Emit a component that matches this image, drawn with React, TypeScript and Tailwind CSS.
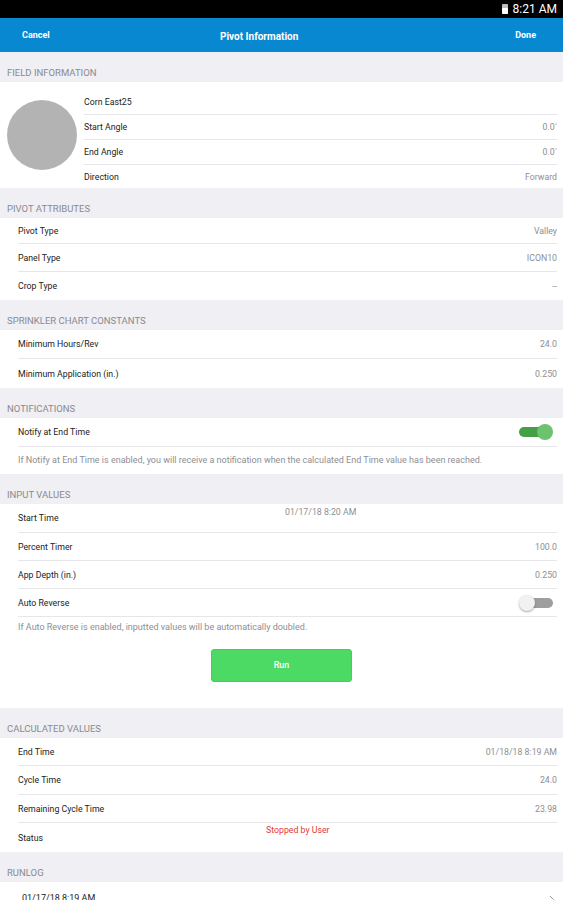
import {ReactNode} from "react";

const font = {fontFamily: "Roboto, 'Noto Sans', sans-serif"};

function SectionHeader({title}: {title: string}) {
    return (
        <div className="h-[30px] pt-[15px] pl-[7px] text-[9.5px] leading-[12px] text-[#8a8a8f] uppercase">
            {title}
        </div>
    );
}

function Row({label, value, h = "h-[28px]", last = false, children}: {
    label: string;
    value?: string;
    h?: string;
    last?: boolean;
    children?: ReactNode;
}) {
    return (
        <div className={`${h} ml-[18px] mr-[6px] pt-[2px] flex items-center justify-between ${last ? "" : "border-b border-[#e6e6ea]"}`}>
            <span className="text-[8.75px] text-[#222]">{label}</span>
            {value !== undefined && <span className="text-[8.75px] text-[#8e8e93]">{value}</span>}
            {children}
        </div>
    );
}

function Toggle({on}: {on: boolean}) {
    return on ? (
        <div className="relative w-[34px] h-[16px] flex items-center mr-[4px] -mt-[2px]">
            <div className="w-[30px] h-[10px] rounded-full bg-[#43a047]"/>
            <div className="absolute right-0 top-0 w-[16px] h-[16px] rounded-full bg-[#6cc26f]"/>
        </div>
    ) : (
        <div className="relative w-[34px] h-[16px] flex items-center justify-end mr-[4px] -mt-[2px]">
            <div className="w-[29px] h-[10px] rounded-full bg-[#9e9e9e]"/>
            <div className="absolute left-0 top-0 w-[16px] h-[16px] rounded-full bg-[#f1f1f1] shadow-[0_1px_2px_rgba(0,0,0,0.35)]"/>
        </div>
    );
}

export default function App() {
    return (
        <div className="w-[563px] h-[900px] overflow-hidden bg-[#efeff4]" style={font}>
            {/* status bar */}
            <div className="h-[18px] bg-black flex items-center justify-end pr-[6px] gap-[5px]">
                <div className="w-[6px] h-[10px] bg-[#bdbdbd] rounded-[1px] relative">
                    <div className="absolute bottom-0 left-0 right-0 h-[6px] bg-white rounded-[1px]"/>
                </div>
                <span className="text-white text-[12px] leading-none">8:21 AM</span>
            </div>

            {/* nav */}
            <div className="h-[34px] bg-[#0788d0] flex items-center pt-[2px] pl-[22px] pr-[27px] text-white font-bold text-[9px]">
                <span className="w-[198px]">Cancel</span>
                <span className="text-[10px]">Pivot Information</span>
                <span className="flex-1 text-right">Done</span>
            </div>

            <SectionHeader title="Field Information"/>
            <div className="bg-white h-[106px] flex items-center">
                <div className="ml-[7px] w-[70px] h-[70px] rounded-full bg-[#b3b3b3] shrink-0"/>
                <div className="flex-1 ml-[7px] mr-[6px] pt-[8px] self-start">
                    <div className="h-[25px] pt-[2px] flex items-center border-b border-[#e6e6ea] text-[8.75px] text-[#222]">Corn East25</div>
                    <div className="h-[25px] pt-[2px] flex items-center justify-between border-b border-[#e6e6ea] text-[8.75px]">
                        <span className="text-[#222]">Start Angle</span>
                        <span className="text-[#8e8e93]">0.0<sup className="text-[6px]">°</sup></span>
                    </div>
                    <div className="h-[25px] pt-[2px] flex items-center justify-between border-b border-[#e6e6ea] text-[8.75px]">
                        <span className="text-[#222]">End Angle</span>
                        <span className="text-[#8e8e93]">0.0<sup className="text-[6px]">°</sup></span>
                    </div>
                    <div className="h-[24px] pt-[2px] flex items-center justify-between text-[8.75px]">
                        <span className="text-[#222]">Direction</span>
                        <span className="text-[#8e8e93]">Forward</span>
                    </div>
                </div>
            </div>

            <SectionHeader title="Pivot Attributes"/>
            <div className="bg-white">
                <Row label="Pivot Type" value="Valley" h="h-[26px]"/>
                <Row label="Panel Type" value="ICON10"/>
                <Row label="Crop Type" value="--" last/>
            </div>

            <SectionHeader title="Sprinkler Chart Constants"/>
            <div className="bg-white">
                <Row label="Minimum Hours/Rev" value="24.0" h="h-[29px]"/>
                <Row label="Minimum Application (in.)" value="0.250" h="h-[29px]" last/>
            </div>

            <SectionHeader title="Notifications"/>
            <div className="bg-white">
                <Row label="Notify at End Time" h="h-[29px]">
                    <Toggle on/>
                </Row>
                <div className="h-[27px] pl-[18px] flex items-center text-[9px] text-[#8e8e93]">
                    If Notify at End Time is enabled, you will receive a notification when the calculated End Time value has been reached.
                </div>
            </div>

            <SectionHeader title="Input Values"/>
            <div className="bg-white pb-[26px]">
                <div className="h-[29px] ml-[18px] mr-[6px] flex border-b border-[#e6e6ea]">
                    <span className="w-[267px] self-center pt-[2px] text-[8.75px] text-[#222]">Start Time</span>
                    <span className="pt-[2px] text-[8.75px] text-[#8e8e93]">01/17/18 8:20 AM</span>
                </div>
                <Row label="Percent Timer" value="100.0"/>
                <Row label="App Depth (in.)" value="0.250"/>
                <Row label="Auto Reverse">
                    <Toggle on={false}/>
                </Row>
                <div className="h-[21px] pl-[18px] pt-[1px] flex items-center text-[9px] text-[#8e8e93]">
                    If Auto Reverse is enabled, inputted values will be automatically doubled.
                </div>
                <div className="flex justify-center mt-[11px]">
                    <button className="w-[141px] h-[33px] rounded-[3px] bg-[#4cd964] border border-[#43cf5a] text-white text-[9px] font-medium">
                        Run
                    </button>
                </div>
            </div>

            <SectionHeader title="Calculated Values"/>
            <div className="bg-white">
                <Row label="End Time" value="01/18/18 8:19 AM"/>
                <Row label="Cycle Time" value="24.0" h="h-[29px]"/>
                <Row label="Remaining Cycle Time" value="23.98"/>
                <div className="h-[29px] ml-[18px] mr-[6px] flex">
                    <span className="w-[248px] self-center pt-[2px] text-[8.75px] text-[#222]">Status</span>
                    <span className="pt-[1px] text-[8.75px] text-[#e53935]">Stopped by User</span>
                </div>
            </div>

            <SectionHeader title="Runlog"/>
            <div className="bg-white h-[40px]">
                <div className="h-[32px] ml-[22px] mr-[8px] pt-[2px] flex items-center justify-between">
                    <span className="text-[9px] text-[#222]">01/17/18 8:19 AM</span>
                    <svg width="6" height="9" viewBox="0 0 6 9" fill="none">
                        <path d="M1 1l3.5 3.5L1 8" stroke="#9e9e9e" strokeWidth="1"/>
                    </svg>
                </div>
            </div>
        </div>
    );
}
